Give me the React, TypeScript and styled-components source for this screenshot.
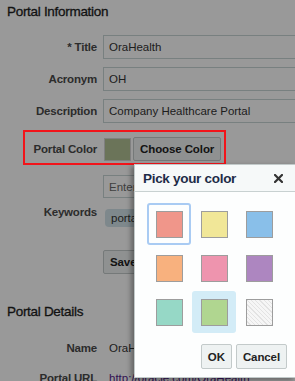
import styled, { createGlobalStyle } from 'styled-components';

const GlobalStyle = createGlobalStyle`
  html, body {
    margin: 0;
    padding: 0;
    background: #fff;
  }
  body {
    font-family: "Liberation Sans", Arial, sans-serif;
  }
`;

const Page = styled.div`
  position: relative;
  width: 295px;
  height: 381px;
  overflow: hidden;
  background: #fff;
  color: #333;
`;

const Heading = styled.h2<{ $top: number }>`
  margin: ${p => p.$top}px 0 0 7px;
  font-size: 13.5px;
  font-weight: normal;
  letter-spacing: -0.3px;
  line-height: 16px;
  color: #1e1e1e;
  -webkit-text-stroke: 0.3px #1e1e1e;
`;

const Row = styled.div<{ $top: number; $align?: string }>`
  display: flex;
  align-items: ${p => p.$align || 'center'};
  margin-top: ${p => p.$top}px;
`;

const Label = styled.div<{ $padTop?: number }>`
  flex: none;
  width: 97px;
  padding-right: 6px;
  padding-top: ${p => p.$padTop || 0}px;
  text-align: right;
  font-size: 11.5px;
  font-weight: bold;
  letter-spacing: -0.2px;
  line-height: 14px;
  color: #4a4a4a;
`;

const Field = styled.div`
  flex: none;
  display: flex;
  flex-direction: column;
  gap: 11px;
`;

const TextBox = styled.div<{ $h?: number; $muted?: boolean }>`
  flex: none;
  box-sizing: border-box;
  width: 200px;
  height: ${p => p.$h || 24}px;
  padding: 0 5px;
  display: flex;
  align-items: center;
  border: 1px solid #c9d5d5;
  background: #fff;
  font-size: 11.5px;
  color: ${p => (p.$muted ? '#6a6a6a' : '#333')};
  white-space: nowrap;
`;

const ColorPicker = styled.div`
  display: flex;
  align-items: center;
  gap: 2px;
`;

const CurrentColor = styled.div<{ $color: string }>`
  box-sizing: border-box;
  width: 27px;
  height: 23px;
  margin-left: 1px;
  border: 1px solid #d5d5d5;
  background: ${p => p.$color};
`;

const Button = styled.button<{ $h?: number }>`
  flex: none;
  box-sizing: border-box;
  height: ${p => p.$h || 24}px;
  padding: 0 6px;
  border: 1px solid #c3caca;
  border-radius: 2px;
  background: #eef2f2;
  font-family: "Liberation Sans", Arial, sans-serif;
  font-size: 11.5px;
  font-weight: bold;
  letter-spacing: -0.1px;
  color: #222;
  white-space: nowrap;
`;

const Token = styled.div`
  align-self: flex-start;
  margin-left: 2px;
  height: 18px;
  padding: 0 6px;
  display: flex;
  align-items: center;
  border-radius: 4px;
  background: #d3e3e9;
  font-size: 11.5px;
  color: #333;
`;

const Value = styled.div<{ $link?: boolean }>`
  padding-left: 6px;
  font-size: 11.5px;
  line-height: 16px;
  color: ${p => (p.$link ? '#551a8b' : '#333')};
  text-decoration: ${p => (p.$link ? 'underline' : 'none')};
  white-space: nowrap;
`;

const Dim = styled.div`
  position: absolute;
  inset: 0;
  background: rgba(0, 0, 0, 0.4);
  z-index: 1;
`;

const Highlight = styled.div`
  position: absolute;
  left: 23px;
  top: 130px;
  width: 203px;
  height: 35px;
  box-sizing: border-box;
  border: 2px solid #f2141a;
  z-index: 2;
`;

const Popup = styled.div`
  position: absolute;
  left: 134px;
  top: 164px;
  width: 162px;
  height: 214px;
  box-sizing: border-box;
  display: flex;
  flex-direction: column;
  border: 1px solid #c2caca;
  background: #fdfefe;
  box-shadow: -3px 2px 5px rgba(0, 0, 0, 0.35);
  z-index: 3;
`;

const PopupHeader = styled.div`
  height: 26px;
  padding: 0 12px 0 8px;
  display: flex;
  align-items: center;
  justify-content: space-between;
  border-bottom: 1px solid #c8d1d1;
  background: #f6f9f9;
  font-size: 13.5px;
  font-weight: bold;
  letter-spacing: -0.3px;
  color: #1d2b47;
`;

const Swatches = styled.div`
  margin: 11px 0 0 12px;
  display: grid;
  grid-template-columns: repeat(3, 44px);
  grid-auto-rows: 42px;
  column-gap: 1px;
  row-gap: 2px;
`;

const Cell = styled.div<{ $selected?: boolean; $hover?: boolean }>`
  box-sizing: border-box;
  display: flex;
  align-items: center;
  justify-content: center;
  border: 2px solid ${p => (p.$selected ? '#a9cbf3' : 'transparent')};
  border-radius: 3px;
  background: ${p => (p.$hover ? '#d3ecf7' : 'transparent')};
`;

const Swatch = styled.div<{ $color: string }>`
  box-sizing: border-box;
  width: 27px;
  height: 27px;
  border: 1px solid #9d9d9d;
  background: ${p => p.$color};
`;

const Footer = styled.div`
  margin-top: auto;
  padding: 0 8px 8px 0;
  display: flex;
  justify-content: flex-end;
  gap: 4px;
`;

const colors = [
  '#f0968a',
  '#f1e798',
  '#89bfe9',
  '#f8b17e',
  '#ee94ae',
  '#ad86c0',
  '#96d8c6',
  '#b0d690',
  'repeating-linear-gradient(45deg, #f6f6f6 0 2px, #e3e3e3 2px 3px)',
];

function CloseIcon() {
  return (
    <svg width="9" height="9" viewBox="0 0 9 9">
      <path d="M1 1L8 8M8 1L1 8" stroke="#333" strokeWidth="2.2" strokeLinecap="square" />
    </svg>
  );
}

export default function App() {
  return (
    <Page>
      <GlobalStyle />
      <Heading $top={4}>Portal Information</Heading>

      <Row $top={15}>
        <Label>* Title</Label>
        <TextBox>OraHealth</TextBox>
      </Row>
      <Row $top={8}>
        <Label>Acronym</Label>
        <TextBox>OH</TextBox>
      </Row>
      <Row $top={8}>
        <Label>Description</Label>
        <TextBox>Company Healthcare Portal</TextBox>
      </Row>
      <Row $top={14}>
        <Label>Portal Color</Label>
        <ColorPicker>
          <CurrentColor $color="#b2c195" />
          <Button>Choose Color</Button>
        </ColorPicker>
      </Row>
      <Row $top={14} $align="flex-start">
        <Label $padTop={30}>Keywords</Label>
        <Field>
          <TextBox $h={23} $muted>Enter keywords</TextBox>
          <Token>portal</Token>
        </Field>
      </Row>
      <Row $top={23}>
        <Label />
        <Button>Save</Button>
      </Row>

      <Heading $top={30}>Portal Details</Heading>
      <Row $top={20}>
        <Label>Name</Label>
        <Value>OraHealth</Value>
      </Row>
      <Row $top={14}>
        <Label>Portal URL</Label>
        <Value $link>http://oracle.com/OraHealth</Value>
      </Row>

      <Dim />
      <Highlight />

      <Popup>
        <PopupHeader>
          <span>Pick your color</span>
          <CloseIcon />
        </PopupHeader>
        <Swatches>
          {colors.map((c, i) => (
            <Cell key={i} $selected={i === 0} $hover={i === 7}>
              <Swatch $color={c} />
            </Cell>
          ))}
        </Swatches>
        <Footer>
          <Button $h={25}>OK</Button>
          <Button $h={25}>Cancel</Button>
        </Footer>
      </Popup>
    </Page>
  );
}
